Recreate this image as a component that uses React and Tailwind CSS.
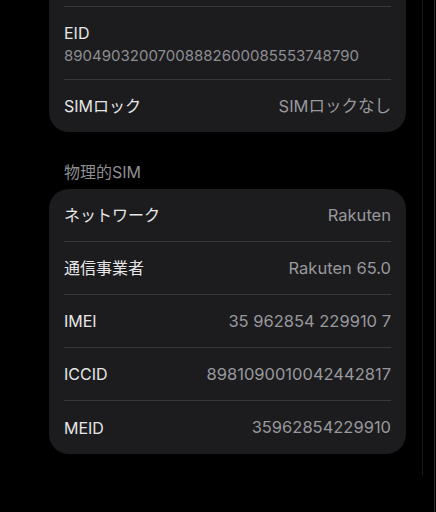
import React from 'react'

const font = { fontFamily: 'Inter, "Noto Sans CJK JP", sans-serif' }

const rows = [
  ['ネットワーク', 'Rakuten'],
  ['通信事業者', 'Rakuten 65.0'],
  ['IMEI', '35 962854 229910 7'],
  ['ICCID', '8981090010042442817'],
  ['MEID', '35962854229910'],
]

function Row({ label, value, last, short }) {
  return (
    <div className="px-[15px]">
      <div className={'flex items-center justify-between ' + (short ? 'h-[52px] ' : 'h-[53px] ') + (last ? '' : 'border-b border-[#38383a]')}>
        <span className="text-[16px] text-[#e6e6e6]">{label}</span>
        <span className="text-[16.5px] text-[#98989d]">{value}</span>
      </div>
    </div>
  )
}

export default function App() {
  return (
    <div className="flex h-[512px] w-[436px] overflow-hidden bg-black" style={font}>
      <div className="w-[422px]">
        <div className="ml-[49px] w-[357px]">
          <div className="rounded-b-[20px] bg-[#1c1c1e] pt-[6px]">
            <div className="mx-[15px] border-t border-[#38383a]" />
            <div className="px-[15px]">
              <div className="border-b border-[#38383a] pt-[15px] pb-[13px]">
                <div className="text-[16px] leading-[22px] text-[#e6e6e6]">EID</div>
                <div className="mt-[2px] text-[15px] leading-[20px] text-[#8e8e93]">89049032007008882600085553748790</div>
              </div>
            </div>
            <Row label="SIMロック" value="SIMロックなし" last short />
          </div>
          <div className="mt-[30px] mb-[7px] px-[15px] text-[16px] leading-[20px] text-[#8e8e93]">物理的SIM</div>
          <div className="rounded-[20px] bg-[#1c1c1e]">
            {rows.map((r, i) => (
              <Row key={i} label={r[0]} value={r[1]} last={i === rows.length - 1} />
            ))}
          </div>
        </div>
      </div>
      <div className="h-[475px] w-px bg-[#1a1a1a]" />
      <div className="w-[11px]" />
      <div className="h-full w-px bg-[#2a2a2a]" />
    </div>
  )
}
